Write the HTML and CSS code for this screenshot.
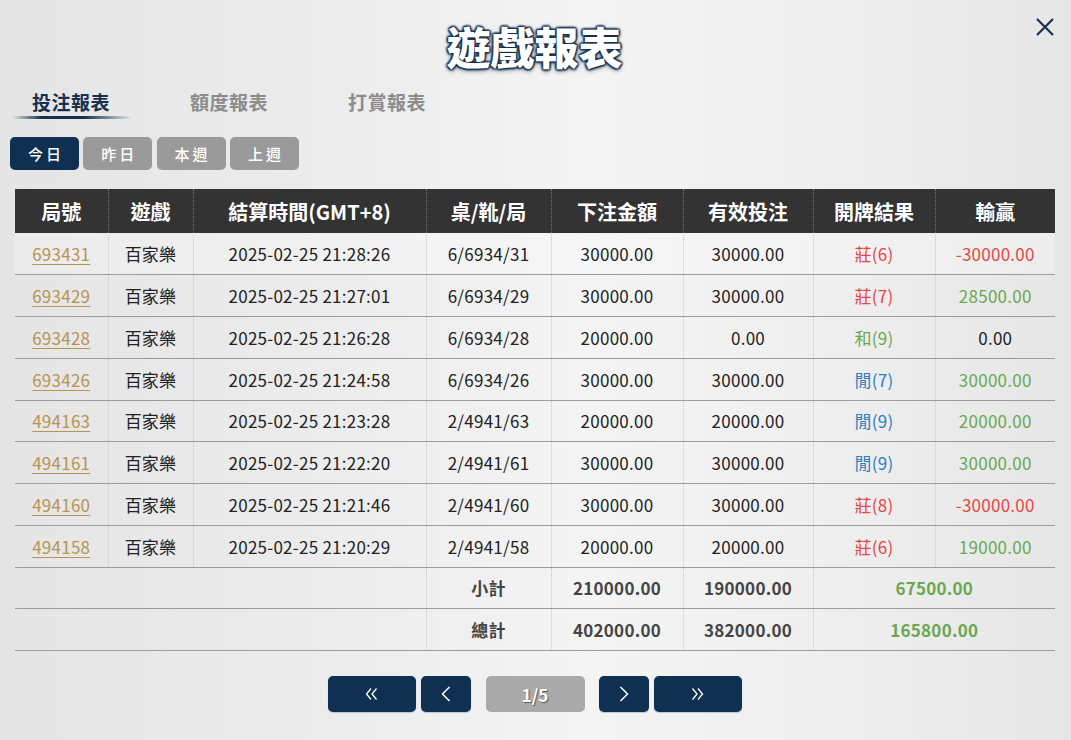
FILE: index.html
```html
<!DOCTYPE html>
<html lang="zh-Hant">
<head>
<meta charset="utf-8">
<title>遊戲報表</title>
<link rel="stylesheet" href="styles.css">
</head>
<body>
<div class="page">
  <header class="head">
    <h1 class="title">遊戲報表</h1>
    <button class="close" aria-label="close">
      <svg width="20" height="20" viewBox="0 0 20 20"><path d="M2 2 L18 18 M18 2 L2 18" stroke="#16304d" stroke-width="2.2" fill="none"/></svg>
    </button>
  </header>
  <nav class="tabs">
    <div class="tab active">投注報表</div>
    <div class="tab">額度報表</div>
    <div class="tab">打賞報表</div>
  </nav>
  <div class="ranges">
    <button class="range active">今日</button>
    <button class="range">昨日</button>
    <button class="range">本週</button>
    <button class="range">上週</button>
  </div>
  <table class="report">
    <colgroup>
      <col style="width:93px"><col style="width:85px"><col style="width:233px"><col style="width:125px"><col style="width:132px"><col style="width:130px"><col style="width:122px"><col style="width:120px">
    </colgroup>
    <thead>
      <tr><th>局號</th><th>遊戲</th><th>結算時間(GMT+8)</th><th>桌/靴/局</th><th>下注金額</th><th>有效投注</th><th>開牌結果</th><th>輸贏</th></tr>
    </thead>
    <tbody>
      <tr><td><a href="#">693431</a></td><td>百家樂</td><td>2025-02-25 21:28:26</td><td>6/6934/31</td><td>30000.00</td><td>30000.00</td><td class="red">莊(6)</td><td class="red">-30000.00</td></tr>
      <tr><td><a href="#">693429</a></td><td>百家樂</td><td>2025-02-25 21:27:01</td><td>6/6934/29</td><td>30000.00</td><td>30000.00</td><td class="red">莊(7)</td><td class="green">28500.00</td></tr>
      <tr><td><a href="#">693428</a></td><td>百家樂</td><td>2025-02-25 21:26:28</td><td>6/6934/28</td><td>20000.00</td><td>0.00</td><td class="green">和(9)</td><td>0.00</td></tr>
      <tr><td><a href="#">693426</a></td><td>百家樂</td><td>2025-02-25 21:24:58</td><td>6/6934/26</td><td>30000.00</td><td>30000.00</td><td class="blue">閒(7)</td><td class="green">30000.00</td></tr>
      <tr><td><a href="#">494163</a></td><td>百家樂</td><td>2025-02-25 21:23:28</td><td>2/4941/63</td><td>20000.00</td><td>20000.00</td><td class="blue">閒(9)</td><td class="green">20000.00</td></tr>
      <tr><td><a href="#">494161</a></td><td>百家樂</td><td>2025-02-25 21:22:20</td><td>2/4941/61</td><td>30000.00</td><td>30000.00</td><td class="blue">閒(9)</td><td class="green">30000.00</td></tr>
      <tr><td><a href="#">494160</a></td><td>百家樂</td><td>2025-02-25 21:21:46</td><td>2/4941/60</td><td>30000.00</td><td>30000.00</td><td class="red">莊(8)</td><td class="red">-30000.00</td></tr>
      <tr><td><a href="#">494158</a></td><td>百家樂</td><td>2025-02-25 21:20:29</td><td>2/4941/58</td><td>20000.00</td><td>20000.00</td><td class="red">莊(6)</td><td class="green">19000.00</td></tr>
    </tbody>
    <tfoot>
      <tr><td colspan="3" class="blank"></td><td>小計</td><td>210000.00</td><td>190000.00</td><td colspan="2" class="green">67500.00</td></tr>
      <tr><td colspan="3" class="blank"></td><td>總計</td><td>402000.00</td><td>382000.00</td><td colspan="2" class="green">165800.00</td></tr>
    </tfoot>
  </table>
  <div class="pager">
    <button class="pg wide" aria-label="first">
      <svg width="13" height="14" viewBox="0 0 13 14"><path d="M6 1.5 L1.5 7 L6 12.5 M11.5 1.5 L7 7 L11.5 12.5" stroke="#fff" stroke-width="1.3" fill="none"/></svg>
    </button>
    <button class="pg" aria-label="prev">
      <svg width="12" height="18" viewBox="0 0 12 18"><path d="M9.5 2 L2.5 9 L9.5 16" stroke="#fff" stroke-width="1.5" fill="none"/></svg>
    </button>
    <div class="pg num">1/5</div>
    <button class="pg" aria-label="next">
      <svg width="12" height="18" viewBox="0 0 12 18"><path d="M2.5 2 L9.5 9 L2.5 16" stroke="#fff" stroke-width="1.5" fill="none"/></svg>
    </button>
    <button class="pg wide" aria-label="last">
      <svg width="13" height="14" viewBox="0 0 13 14"><path d="M1.5 1.5 L6 7 L1.5 12.5 M7 1.5 L11.5 7 L7 12.5" stroke="#fff" stroke-width="1.3" fill="none"/></svg>
    </button>
  </div>
</div>
</body>
</html>
```

FILE: styles.css
```css
* { box-sizing: border-box; }
html, body { margin: 0; padding: 0; }
body {
  width: 1071px;
  height: 740px;
  overflow: hidden;
  font-family: "Noto Sans CJK TC", "Noto Sans", sans-serif;
  background: linear-gradient(to right, #e5e5e5 0%, #ececec 30%, #f4f4f4 55%, #eeeeee 80%, #e6e6e6 100%);
  color: #222;
}
.page { padding: 0 16px 0 10px; }
.head {
  position: relative;
  height: 84px;
  display: flex;
  justify-content: center;
  align-items: center;
}
.title {
  margin: 0;
  margin-left: 4px;
  padding-top: 8px;
  font-size: 44px;
  font-weight: 900;
  color: #fff;
  line-height: 1;
  text-shadow:
    0 0 2px #16304d, 0 0 3px #16304d, 1px 1px 2px #16304d, -1px -1px 2px #16304d,
    1px -1px 2px #16304d, -1px 1px 2px #16304d, 0 2px 5px rgba(22,48,77,.6);
}
.close {
  position: absolute;
  right: 0;
  top: 17px;
  width: 20px;
  height: 20px;
  padding: 0;
  border: 0;
  background: none;
  cursor: pointer;
}
.close svg { display: block; }
.tabs {
  display: flex;
  height: 34px;
  padding-left: 2px;
  padding-top: 5px;
  box-sizing: content-box;
}
.tab {
  position: relative;
  width: 158px;
  padding-left: 20px;
  font-size: 19px;
  font-weight: 700;
  color: #8c8c8c;
  line-height: 26px;
  letter-spacing: 0.5px;
}
.tab.active { color: #16304d; }
.tab.active::after {
  content: "";
  position: absolute;
  left: 0;
  top: 27px;
  width: 120px;
  height: 3px;
  border-radius: 2px;
  background: linear-gradient(to right, rgba(22,48,77,0) 0%, #16304d 25%, #16304d 60%, rgba(22,48,77,0) 100%);
}
.ranges {
  display: flex;
  gap: 4.3px;
  margin-top: 14px;
}
.range {
  width: 69px;
  height: 33px;
  border: 0;
  border-radius: 5px;
  background: #9a9a9a;
  color: #fff;
  font-family: inherit;
  font-size: 15px;
  font-weight: 500;
  letter-spacing: 3px;
  padding: 0 0 0 3px;
}
.range.active { background: #0f3050; }
.report {
  margin: 19px 0 0 5px;
  width: 1040px;
  border-collapse: collapse;
  table-layout: fixed;
}
.report th {
  height: 44px;
  background: #333;
  color: #fff;
  font-size: 20px;
  font-weight: 700;
  padding: 0;
  border-left: 1px dotted #777;
}
.report th:first-child { border-left: 0; }
.report td {
  height: 41.75px;
  padding: 0;
  text-align: center;
  font-size: 17px;
  letter-spacing: 0.25px;
  color: #222;
  border-bottom: 1px solid #9c9c9c;
  border-left: 1px dotted #c8c8c8;
}
.report td:first-child { border-left: 0; }
.report tbody tr:first-child td { background: rgba(255,255,255,.25); }
.report a { color: #b89452; text-decoration: underline; text-underline-offset: 3px; }
.report .red { color: #e84545; }
.report .green { color: #6aa84f; }
.report .blue { color: #2b7fbf; }
.report tfoot td {
  font-weight: 700;
  color: #444;
}
.report tfoot td.green { color: #6aa84f; }
.pager {
  display: flex;
  justify-content: center;
  margin-top: 25px;
  padding-left: 4px;
}
.pg {
  display: flex;
  align-items: center;
  justify-content: center;
  height: 36px;
  width: 50px;
  border: 0;
  border-radius: 5px;
  background: #0f3050;
  color: #fff;
  padding: 0;
  margin-right: 5px;
  box-shadow: 0 1px 1px rgba(120,160,210,.5);
}
.pg svg { display: block; }
.pg.wide { width: 88px; }
.pg.num {
  width: 99px;
  margin: 0 14px 0 10px;
  background: #aaaaaa;
  font-family: "Noto Sans CJK TC", sans-serif;
  font-size: 17px;
  font-weight: 700;
  text-shadow: 1px 1px 1px rgba(0,0,0,.5);
  box-shadow: none;
}
.pg:last-child { margin-right: 0; }
```
